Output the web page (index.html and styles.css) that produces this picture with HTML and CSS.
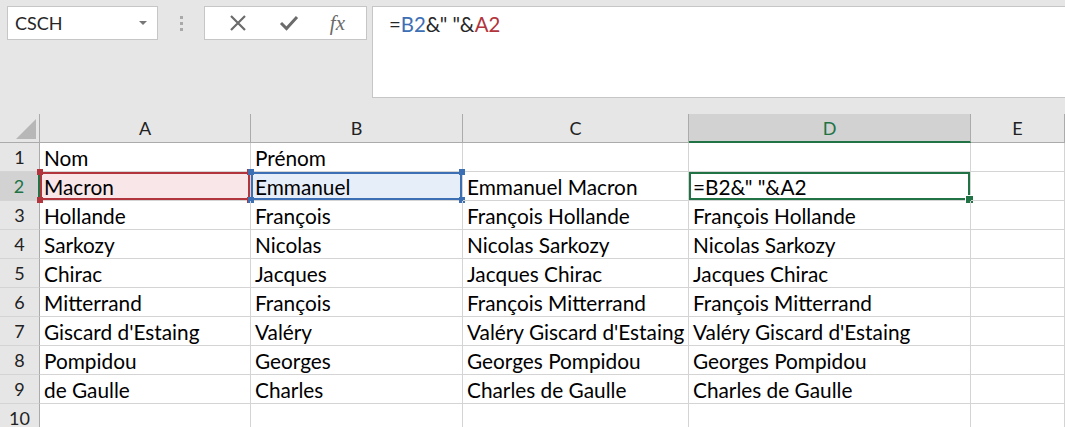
FILE: index.html
```html
<!DOCTYPE html>
<html lang="fr">
<head>
  <meta charset="UTF-8" />
  <title>Classeur - CONCAT</title>
  <link rel="stylesheet" href="styles.css">
</head>
<body>
  <div class="toolbar">
    <div class="namebox">
      <span>CSCH</span>
      <span class="caret"></span>
    </div>
    <div class="grip"><i></i><i></i><i></i></div>
    <div class="fnbuttons">
      <svg width="20" height="20" viewBox="0 0 20 20"><path d="M3 3 L17 17 M17 3 L3 17" stroke="#6b6b6b" stroke-width="2.2" fill="none"/></svg>
      <svg width="22" height="20" viewBox="0 0 22 20"><path d="M3 10 L8.5 15.5 L19 4" stroke="#6b6b6b" stroke-width="3" fill="none"/></svg>
      <span class="fx">fx</span>
    </div>
    <div class="formula">=<span class="ref-b">B2</span>&amp;" "&amp;<span class="ref-a">A2</span></div>
  </div>

  <div class="sheet">
    <div class="hd corner"><span class="tri"></span></div>
    <div class="hd">A</div>
    <div class="hd">B</div>
    <div class="hd">C</div>
    <div class="hd active">D</div>
    <div class="hd">E</div>

    <div class="rh">1</div>
    <div class="c">Nom</div><div class="c">Prénom</div><div class="c"></div><div class="c"></div><div class="c"></div>

    <div class="rh active">2</div>
    <div class="c sel-red">Macron<i class="h tl"></i><i class="h tr"></i><i class="h bl"></i><i class="h br"></i></div>
    <div class="c sel-blue">Emmanuel<i class="h tl"></i><i class="h tr"></i><i class="h bl"></i><i class="h br"></i></div>
    <div class="c">Emmanuel Macron</div>
    <div class="c sel-cur">=B2&amp;" "&amp;A2<i class="fill"></i></div>
    <div class="c"></div>

    <div class="rh">3</div>
    <div class="c">Hollande</div><div class="c">François</div><div class="c">François Hollande</div><div class="c">François Hollande</div><div class="c"></div>
    <div class="rh">4</div>
    <div class="c">Sarkozy</div><div class="c">Nicolas</div><div class="c">Nicolas Sarkozy</div><div class="c">Nicolas Sarkozy</div><div class="c"></div>
    <div class="rh">5</div>
    <div class="c">Chirac</div><div class="c">Jacques</div><div class="c">Jacques Chirac</div><div class="c">Jacques Chirac</div><div class="c"></div>
    <div class="rh">6</div>
    <div class="c">Mitterrand</div><div class="c">François</div><div class="c">François Mitterrand</div><div class="c">François Mitterrand</div><div class="c"></div>
    <div class="rh">7</div>
    <div class="c">Giscard d'Estaing</div><div class="c">Valéry</div><div class="c">Valéry Giscard d'Estaing</div><div class="c">Valéry Giscard d'Estaing</div><div class="c"></div>
    <div class="rh">8</div>
    <div class="c">Pompidou</div><div class="c">Georges</div><div class="c">Georges Pompidou</div><div class="c">Georges Pompidou</div><div class="c"></div>
    <div class="rh">9</div>
    <div class="c">de Gaulle</div><div class="c">Charles</div><div class="c">Charles de Gaulle</div><div class="c">Charles de Gaulle</div><div class="c"></div>
    <div class="rh">10</div>
    <div class="c"></div><div class="c"></div><div class="c"></div><div class="c"></div><div class="c"></div>
  </div>
</body>
</html>
```

FILE: styles.css
```css
body {
  margin: 0;
  background: #ffffff;
  font-family: Lato, "Open Sans", sans-serif;
  color: #000;
  overflow: hidden;
}

.toolbar {
  height: 114px;
  background: #e6e6e6;
  display: flex;
  align-items: flex-start;
  padding: 6px 0 0 7px;
  box-sizing: border-box;
}

.namebox {
  width: 151px;
  height: 34px;
  background: #fff;
  border: 1px solid #c6c6c6;
  box-sizing: border-box;
  display: flex;
  align-items: center;
  justify-content: space-between;
  padding: 0 10px 0 7px;
  font-size: 18px;
  color: #262626;
}

.caret {
  width: 0;
  height: 0;
  border-left: 4px solid transparent;
  border-right: 4px solid transparent;
  border-top: 4px solid #777;
}

.grip {
  width: 46px;
  height: 34px;
  display: flex;
  flex-direction: column;
  align-items: center;
  justify-content: center;
  gap: 3px;
}

.grip i {
  width: 3px;
  height: 3px;
  background: #a9a9a9;
}

.fnbuttons {
  width: 163px;
  height: 34px;
  background: #fff;
  border: 1px solid #c6c6c6;
  box-sizing: border-box;
  display: flex;
  align-items: center;
  justify-content: space-around;
  padding: 0 6px 0 8px;
}

.fx {
  font-family: "Liberation Serif", serif;
  font-style: italic;
  font-size: 21px;
  color: #6b6b6b;
}

.formula {
  flex: 1;
  height: 92px;
  margin-left: 5px;
  background: #fff;
  border: 1px solid #c6c6c6;
  border-right: none;
  box-sizing: border-box;
  padding: 5px 0 0 16px;
  font-size: 20.4px;
  color: #262626;
}

.ref-b { color: #3d6fb5; }
.ref-a { color: #b2343c; }

.sheet {
  display: grid;
  grid-template-columns: 40px 211px 212px 226px 282px 1fr;
  grid-auto-rows: 29px;
  font-size: 18px;
}

.hd {
  background: #e6e6e6;
  border-right: 1px solid #ababab;
  border-bottom: 1px solid #ababab;
  display: flex;
  align-items: center;
  justify-content: center;
  color: #222;
  box-sizing: border-box;
  height: 29px;
}

.hd.corner {
  position: relative;
}

.tri {
  position: absolute;
  right: 3px;
  bottom: 3px;
  width: 0;
  height: 0;
  border-left: 20px solid transparent;
  border-bottom: 20px solid #b7b7b7;
}

.hd.active {
  background: #d2d2d2;
  color: #217346;
  border-bottom: 2px solid #217346;
}

.rh {
  background: #e6e6e6;
  border-right: 1px solid #ababab;
  border-bottom: 1px solid #d4d4d4;
  display: flex;
  align-items: center;
  justify-content: center;
  color: #222;
  box-sizing: border-box;
}

.rh.active {
  background: #d2d2d2;
  color: #217346;
  border-right: 2px solid #217346;
}

.c {
  position: relative;
  border-right: 1px solid #d4d4d4;
  border-bottom: 1px solid #d4d4d4;
  box-sizing: border-box;
  padding: 1px 4px 0;
  display: flex;
  align-items: center;
  white-space: nowrap;
  font-size: 20.8px;
}

.sel-red {
  background: #f8e6e8;
  box-shadow: inset 0 0 0 2px #b2343c;
}

.sel-blue {
  background: #e6eef9;
  box-shadow: inset 0 0 0 2px #3d6fb5;
}

.sel-cur {
  box-shadow: inset 0 0 0 2px #217346;
}

.h {
  position: absolute;
  width: 6px;
  height: 6px;
}

.sel-red .h { background: #b2343c; }
.sel-blue .h { background: #3d6fb5; }

.h.tl { left: -3px; top: -3px; }
.h.tr { right: -3px; top: -3px; }
.h.bl { left: -3px; bottom: -3px; }
.h.br { right: -3px; bottom: -3px; }

.fill {
  position: absolute;
  right: -4px;
  bottom: -4px;
  width: 7px;
  height: 7px;
  background: #217346;
  border: 1px solid #fff;
}
```
